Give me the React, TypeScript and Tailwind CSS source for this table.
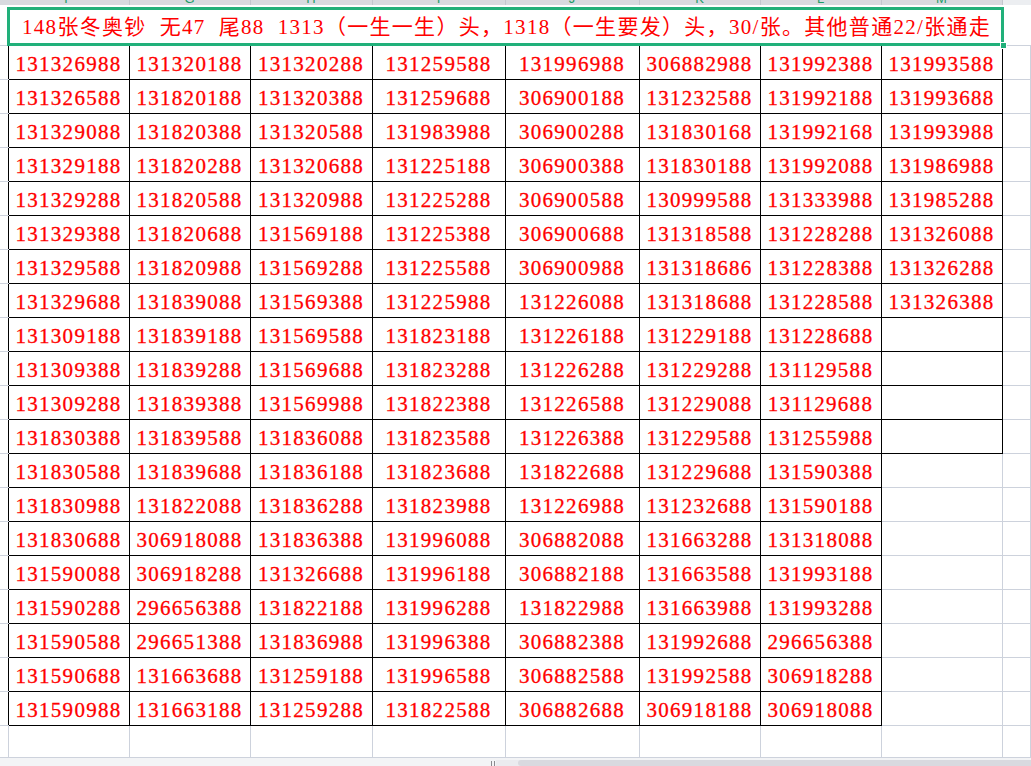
const rows: string[][] = [
  ['131326988', '131320188', '131320288', '131259588', '131996988', '306882988', '131992388', '131993588'],
  ['131326588', '131820188', '131320388', '131259688', '306900188', '131232588', '131992188', '131993688'],
  ['131329088', '131820388', '131320588', '131983988', '306900288', '131830168', '131992168', '131993988'],
  ['131329188', '131820288', '131320688', '131225188', '306900388', '131830188', '131992088', '131986988'],
  ['131329288', '131820588', '131320988', '131225288', '306900588', '130999588', '131333988', '131985288'],
  ['131329388', '131820688', '131569188', '131225388', '306900688', '131318588', '131228288', '131326088'],
  ['131329588', '131820988', '131569288', '131225588', '306900988', '131318686', '131228388', '131326288'],
  ['131329688', '131839088', '131569388', '131225988', '131226088', '131318688', '131228588', '131326388'],
  ['131309188', '131839188', '131569588', '131823188', '131226188', '131229188', '131228688', ''],
  ['131309388', '131839288', '131569688', '131823288', '131226288', '131229288', '131129588', ''],
  ['131309288', '131839388', '131569988', '131822388', '131226588', '131229088', '131129688', ''],
  ['131830388', '131839588', '131836088', '131823588', '131226388', '131229588', '131255988', ''],
  ['131830588', '131839688', '131836188', '131823688', '131822688', '131229688', '131590388'],
  ['131830988', '131822088', '131836288', '131823988', '131226988', '131232688', '131590188'],
  ['131830688', '306918088', '131836388', '131996088', '306882088', '131663288', '131318088'],
  ['131590088', '306918288', '131326688', '131996188', '306882188', '131663588', '131993188'],
  ['131590288', '296656388', '131822188', '131996288', '131822988', '131663988', '131993288'],
  ['131590588', '296651388', '131836988', '131996388', '306882388', '131992688', '296656388'],
  ['131590688', '131663688', '131259188', '131996588', '306882588', '131992588', '306918288'],
  ['131590988', '131663188', '131259288', '131822588', '306882688', '306918188', '306918088'],
];

const letters = ['F', 'G', 'H', 'I', 'J', 'K', 'L', 'M'];

const grid = 'border border-[#cdd2dc]';
const gutter = 'border-0 border-b border-[#cdd2dc] p-0';

export default function App() {
  return (
    <div className="w-[1031px] h-[766px] overflow-hidden bg-white flex flex-col font-['Liberation_Serif','Noto_Sans_CJK_SC',serif]">
      <table className="table-fixed border-collapse w-[1031px]">
        <colgroup>
          <col className="w-[8px]" />
          <col className="w-[121px]" />
          <col className="w-[121px]" />
          <col className="w-[122px]" />
          <col className="w-[133px]" />
          <col className="w-[134px]" />
          <col className="w-[121px]" />
          <col className="w-[121px]" />
          <col className="w-[121px]" />
          <col />
        </colgroup>
        <tbody>
          {/* column header strip, mostly scrolled out of view */}
          <tr className="h-[5px]">
            <td className="p-0 bg-[#d8dadf]" />
            {letters.map((l) => (
              <td key={l} className="p-0 bg-[#d8dadf] border-0 border-r border-[#c4c7ce]">
                <div className="h-[5px] overflow-hidden flex items-end justify-center">
                  <span className="text-[13px] leading-[13px] text-[#1e9c68] font-['Liberation_Sans',sans-serif]">
                    {l}
                  </span>
                </div>
              </td>
            ))}
            <td className="p-0 bg-[#eceef1]" />
          </tr>

          <tr className="h-[40px]">
            <td className={gutter} />
            <td colSpan={8} className="p-0 relative">
              <div className="h-[40px] flex items-center pl-[14px] pt-[6px] whitespace-pre text-[21px] tracking-[1.3px] text-[#ff0000]">
                {'148张冬奥钞  无47  尾88  1313（一生一生）头，1318（一生要发）头，30/张。其他普通22/张通走'}
              </div>
              <div className="absolute left-[-1px] right-[-2px] top-[2px] bottom-[-1px] border-[3px] border-[#21b07a] pointer-events-none" />
              <div className="absolute right-[-5px] bottom-[-4px] w-[7px] h-[7px] bg-[#21b07a] border border-white" />
            </td>
            <td className="border-0 border-b border-[#cdd2dc] p-0" />
          </tr>

          {rows.map((r, i) => (
            <tr key={i} className="h-[34px]">
              <td className={gutter} />
              {Array.from({ length: 8 }).map((_, j) => {
                const v = r[j];
                const boxed = v !== undefined;
                return (
                  <td
                    key={j}
                    className={`p-0 pt-[4px] text-center text-[21px] leading-none tracking-[1.3px] text-[#ff0000] [-webkit-text-stroke:0.3px_#ff0000] ${
                      boxed ? 'border border-black' : grid
                    }`}
                  >
                    {v}
                  </td>
                );
              })}
              <td className={grid} />
            </tr>
          ))}

          <tr className="h-[32px]">
            <td className={gutter} />
            {letters.map((l) => (
              <td key={l} className={grid} />
            ))}
            <td className={grid} />
          </tr>
        </tbody>
      </table>

      {/* bottom scrollbar strip */}
      <div className="h-[9px] bg-[#f3f4f6] flex items-end">
        <div className="w-[490px]" />
        <div className="w-[6px] h-[5px] flex gap-[2px] justify-center">
          <div className="w-px h-full bg-[#8a8a8f]" />
          <div className="w-px h-full bg-[#8a8a8f]" />
        </div>
        <div className="flex-1 h-[6px] bg-[#ebebef] flex items-stretch pl-[22px]">
          <div className="flex-1 rounded-l-full bg-[#d9d9df]" />
        </div>
      </div>
    </div>
  );
}
